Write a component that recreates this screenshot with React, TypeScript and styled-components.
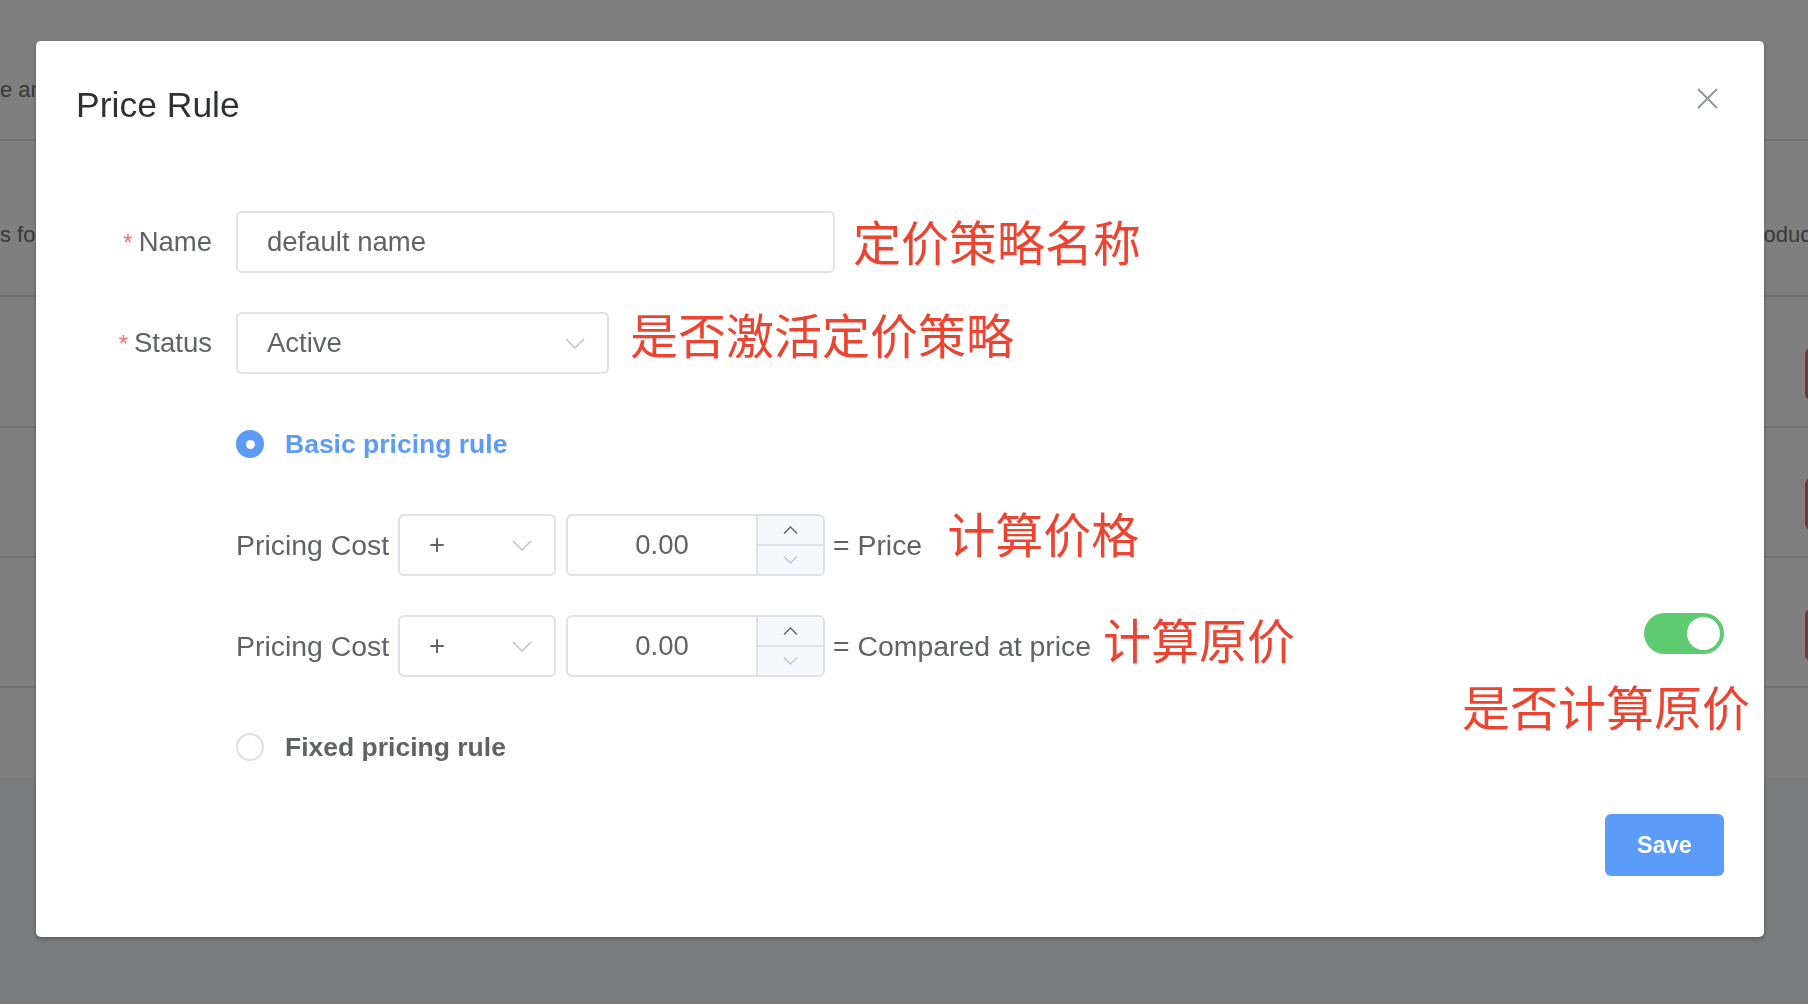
import React from "react";
import styled, { createGlobalStyle } from "styled-components";

const GlobalStyle = createGlobalStyle`
  html, body { margin: 0; padding: 0; width: 1808px; height: 1004px; overflow: hidden; }
  body { font-family: "Liberation Sans", Arial, sans-serif; background: #f4f6fa; }
  * { box-sizing: border-box; }
`;

const Page = styled.div`
  width: 1808px;
  height: 1004px;
  background: #f4f6fa;
  overflow: hidden;
`;

const Table = styled.div`
  margin-left: -38px;
  width: 1900px;
  background: #ffffff;
  display: flex;
  flex-direction: column;
`;

const TableRow = styled.div<{ $h: number; $pt: number; $line?: boolean }>`
  display: grid;
  grid-template-columns: 1782px 61px 1fr;
  align-items: start;
  height: ${(p) => p.$h}px;
  padding-top: ${(p) => p.$pt}px;
  border-bottom: ${(p) => (p.$line ? "2px solid #e2e3e8" : "none")};
  font-size: 22px;
  line-height: 32px;
  color: #747474;
  white-space: nowrap;
`;

const Cell = styled.div`
  overflow: visible;
`;

const DangerButton = styled.div`
  width: 80px;
  height: 52px;
  border-radius: 6px;
  background: #f56c6c;
`;

const Overlay = styled.div`
  position: fixed;
  inset: 0;
  background: rgba(0, 0, 0, 0.5);
  padding: 41px 0 0 36px;
`;

const Dialog = styled.div`
  width: 1728px;
  background: #ffffff;
  border-radius: 5px;
  box-shadow: 0 2px 4px rgba(0, 0, 0, 0.25);
`;

const Header = styled.div`
  display: flex;
  justify-content: space-between;
  align-items: flex-start;
  padding: 43px 46px 0 40px;
`;

const Title = styled.h2`
  margin: 0;
  font-size: 35.5px;
  line-height: 42px;
  font-weight: 400;
  color: #303133;
`;

const CloseButton = styled.button`
  margin-top: 4px;
  width: 21px;
  height: 21px;
  padding: 0;
  border: none;
  background: none;
  display: flex;
`;

const Body = styled.div`
  padding: 85px 40px 0 40px;
  display: flex;
  flex-direction: column;
  gap: 39px;
`;

const FormRow = styled.div<{ $indent?: boolean }>`
  display: flex;
  align-items: center;
  height: 62px;
  padding-left: ${(p) => (p.$indent ? "160px" : "0")};
`;

const Label = styled.label`
  width: 160px;
  flex-shrink: 0;
  padding-right: 24px;
  text-align: right;
  font-size: 27.5px;
  color: #606266;
  white-space: nowrap;
`;

const Required = styled.span`
  color: #f56c6c;
  font-size: 24px;
  margin-right: 6px;
`;

const Field = styled.div<{ $w: number }>`
  width: ${(p) => p.$w}px;
  height: 62px;
  flex-shrink: 0;
  border: 2px solid #dfe1e6;
  border-radius: 6px;
  padding: 0 22px 0 29px;
  display: flex;
  align-items: center;
  justify-content: space-between;
  font-size: 27.5px;
  color: #606266;
  background: #fff;
`;

const Note = styled.span<{ $ml: number; $lift?: number }>`
  font-family: "Noto Sans CJK SC", "Noto Sans CJK TC", sans-serif;
  font-size: 48px;
  line-height: 1;
  color: #ec4431;
  white-space: nowrap;
  margin-left: ${(p) => p.$ml}px;
  margin-bottom: ${(p) => (p.$lift || 0) * 2}px;
`;

const Radio = styled.span<{ $checked?: boolean }>`
  width: 28px;
  height: 28px;
  border-radius: 50%;
  flex-shrink: 0;
  display: flex;
  align-items: center;
  justify-content: center;
  background: ${(p) => (p.$checked ? "#5b9cf8" : "#fff")};
  border: 2px solid ${(p) => (p.$checked ? "#5b9cf8" : "#dcdfe6")};
  &::after {
    content: "";
    width: 9px;
    height: 9px;
    border-radius: 50%;
    background: #fff;
    display: ${(p) => (p.$checked ? "block" : "none")};
  }
`;

const RadioLabel = styled.span<{ $checked?: boolean }>`
  margin-left: 21px;
  font-size: 26.5px;
  font-weight: 700;
  color: ${(p) => (p.$checked ? "#5b9cf8" : "#606266")};
`;

const CostLabel = styled.span`
  width: 162px;
  flex-shrink: 0;
  font-size: 28.4px;
  color: #606266;
  white-space: nowrap;
`;

const NumberBox = styled.div`
  width: 259px;
  height: 62px;
  margin-left: 10px;
  flex-shrink: 0;
  border: 2px solid #dfe1e6;
  border-radius: 6px;
  display: flex;
  overflow: hidden;
`;

const NumValue = styled.div`
  flex: 1;
  display: flex;
  align-items: center;
  justify-content: center;
  font-size: 27.5px;
  color: #606266;
`;

const Handler = styled.div`
  width: 67px;
  display: flex;
  flex-direction: column;
  background: #f5f7fa;
  border-left: 2px solid #dfe1e6;
`;

const Step = styled.div<{ $top?: boolean }>`
  flex: 1;
  display: flex;
  align-items: center;
  justify-content: center;
  border-bottom: ${(p) => (p.$top ? "2px solid #dfe1e6" : "none")};
`;

const Equals = styled.span`
  margin-left: 8px;
  font-size: 28.4px;
  color: #606266;
  white-space: nowrap;
`;

const SwitchWrap = styled.div`
  margin-left: auto;
  margin-bottom: 25px;
  position: relative;
`;

const SwitchTrack = styled.div`
  width: 80px;
  height: 41px;
  border-radius: 21px;
  background: #5fcb71;
  display: flex;
  align-items: center;
  justify-content: flex-end;
  padding: 0 4px;
`;

const SwitchKnob = styled.span`
  width: 33px;
  height: 33px;
  border-radius: 50%;
  background: #fff;
`;

const SwitchNote = styled.span`
  position: absolute;
  top: calc(100% + 27px);
  right: -26px;
  font-family: "Noto Sans CJK SC", "Noto Sans CJK TC", sans-serif;
  font-size: 48px;
  line-height: 1;
  color: #ec4431;
  white-space: nowrap;
`;

const Footer = styled.div`
  display: flex;
  justify-content: flex-end;
  padding: 36px 40px 61px;
`;

const SaveButton = styled.button`
  width: 119px;
  height: 62px;
  border: none;
  border-radius: 6px;
  background: #5b9cf8;
  color: #fff;
  font-family: "Liberation Sans", Arial, sans-serif;
  font-size: 23.5px;
  font-weight: 700;
`;

const Chevron = () => (
  <svg width="20" height="11" viewBox="0 0 20 11" fill="none">
    <path d="M1 1 L10 10 L19 1" stroke="#c0c4cc" strokeWidth="1.6" />
  </svg>
);

const Arrow = ({ up, color }: { up?: boolean; color: string }) => (
  <svg width="15" height="8" viewBox="0 0 15 8" fill="none">
    <path d={up ? "M1 7.5 L7.5 1 L14 7.5" : "M1 0.5 L7.5 7 L14 0.5"} stroke={color} strokeWidth="1.4" />
  </svg>
);

const PricingRow = ({ result, note, noteMl, lift, children }: { result: string; note: string; noteMl: number; lift: number; children?: React.ReactNode }) => (
  <FormRow $indent>
    <CostLabel>Pricing Cost</CostLabel>
    <Field $w={158}>
      <span>+</span>
      <Chevron />
    </Field>
    <NumberBox>
      <NumValue>0.00</NumValue>
      <Handler>
        <Step $top>
          <Arrow up color="#606266" />
        </Step>
        <Step>
          <Arrow color="#c0c4cc" />
        </Step>
      </Handler>
    </NumberBox>
    <Equals>{result}</Equals>
    <Note $ml={noteMl} $lift={lift}>{note}</Note>
    {children}
  </FormRow>
);

export default function App() {
  return (
    <>
      <GlobalStyle />
      <Page>
        <Table>
          <TableRow $h={141} $pt={74} $line>
            <Cell>Price and discount</Cell>
            <Cell />
            <Cell />
          </TableRow>
          <TableRow $h={156} $pt={78} $line>
            <Cell>Fees for all items</Cell>
            <Cell>products</Cell>
            <Cell />
          </TableRow>
          <TableRow $h={131} $pt={51} $line>
            <Cell />
            <Cell />
            <DangerButton />
          </TableRow>
          <TableRow $h={130} $pt={50} $line>
            <Cell />
            <Cell />
            <DangerButton />
          </TableRow>
          <TableRow $h={130} $pt={51} $line>
            <Cell />
            <Cell />
            <DangerButton />
          </TableRow>
          <TableRow $h={90} $pt={0}>
            <Cell />
          </TableRow>
        </Table>
      </Page>
      <Overlay>
        <Dialog>
          <Header>
            <Title>Price Rule</Title>
            <CloseButton aria-label="Close">
              <svg width="21" height="21" viewBox="0 0 21 21" fill="none">
                <path d="M1 1 L20 20 M20 1 L1 20" stroke="#909399" strokeWidth="1.8" />
              </svg>
            </CloseButton>
          </Header>
          <Body>
            <FormRow>
              <Label>
                <Required>*</Required>Name
              </Label>
              <Field $w={599}>
                <span>default name</span>
              </Field>
              <Note $ml={18} $lift={2}>定价策略名称</Note>
            </FormRow>
            <FormRow>
              <Label>
                <Required>*</Required>Status
              </Label>
              <Field $w={373}>
                <span>Active</span>
                <Chevron />
              </Field>
              <Note $ml={21} $lift={10.5}>是否激活定价策略</Note>
            </FormRow>
            <FormRow $indent>
              <Radio $checked />
              <RadioLabel $checked>Basic pricing rule</RadioLabel>
            </FormRow>
            <PricingRow result="= Price" note="计算价格" noteMl={25} lift={13.5} />
            <PricingRow result="= Compared at price" note="计算原价" noteMl={12} lift={8.5}>
              <SwitchWrap>
                <SwitchTrack>
                  <SwitchKnob />
                </SwitchTrack>
                <SwitchNote>是否计算原价</SwitchNote>
              </SwitchWrap>
            </PricingRow>
            <FormRow $indent>
              <Radio />
              <RadioLabel>Fixed pricing rule</RadioLabel>
            </FormRow>
          </Body>
          <Footer>
            <SaveButton>Save</SaveButton>
          </Footer>
        </Dialog>
      </Overlay>
    </>
  );
}
